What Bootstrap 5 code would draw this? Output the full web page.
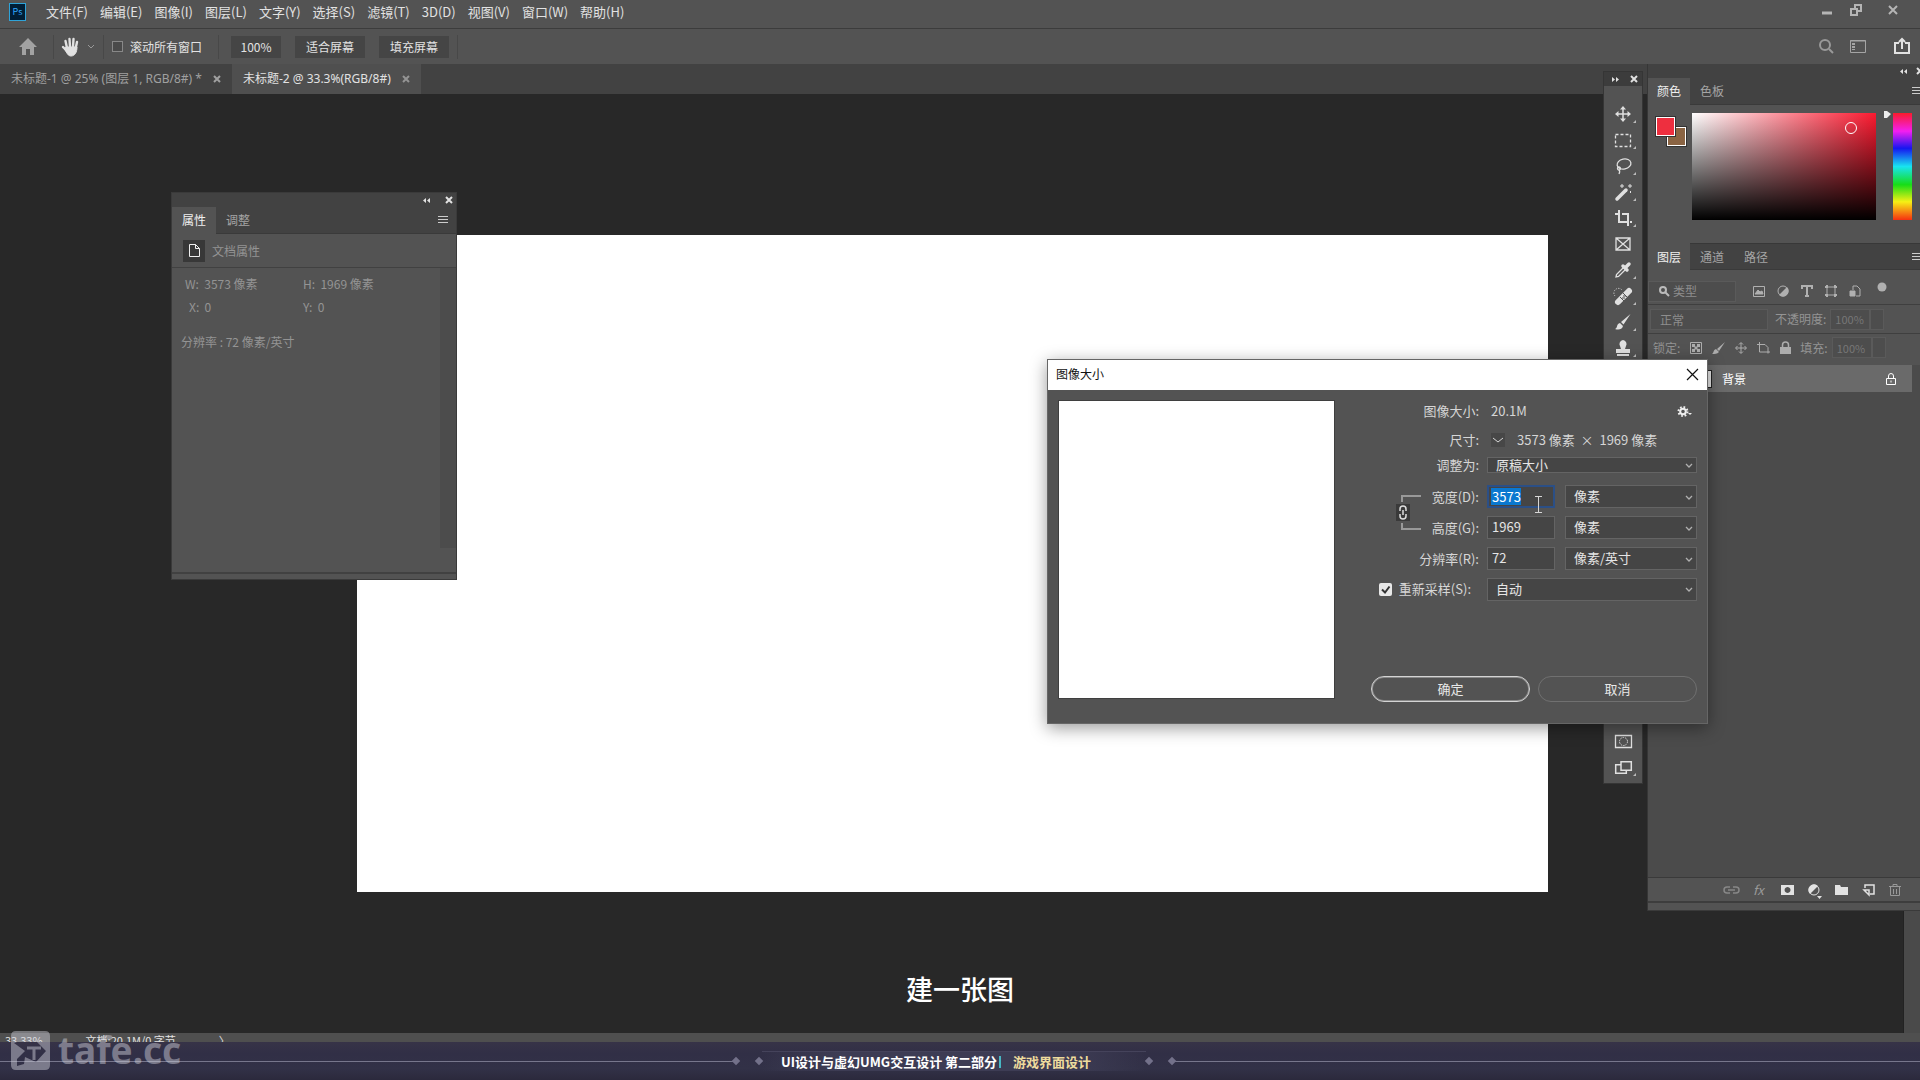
<!DOCTYPE html>
<html lang="zh-CN">
<head>
<meta charset="utf-8">
<meta name="viewport" content="width=device-width, initial-scale=1">
<title>图像大小</title>
<link href="https://cdn.jsdelivr.net/npm/bootstrap@5.3.0/dist/css/bootstrap.min.css" rel="stylesheet">
<style>
  body { font-family: "Noto Sans CJK SC", "Noto Sans", sans-serif; font-size: 13px; line-height: 20px; color: #e2e2e2; background: #282828; }
  button, input, select { font: inherit; color: inherit; }
  svg { display: block; fill: none; stroke: currentColor; flex: none; overflow: visible; }
  .plain { background: none; border: 0; padding: 0; color: inherit; }
  .bg-face { background: #535353; }
  .menubar { height: 29px; border-bottom: 1px solid #3c3c3c; padding: 0 0 4px 9px; }
  .menubar nav { gap: 12px; margin-left: 20px; }
  .menubar a { color: #e2e2e2; text-decoration: none; }
  .pslogo { width: 17px; height: 18px; background: #001e36; border: 1px solid #2fa3d8; color: #31a8ff; font-size: 9px; line-height: 16px; text-align: center; }
  .winbtns { gap: 17px; padding: 0 21px 5px 0; color: #b5b5b5; }
  .optbar { height: 35px; padding: 0 10px 0 19px; }
  .optbtns { gap: 14px; margin-left: 12px; }
  .optbtn { height: 22px; background: #454545; border: 0; font-size: 12px; width: 70px; padding: 0; line-height: 20px; }
  .optbtn.pct { width: 50px; }
  .optlabel { gap: 7px; font-size: 12px; }
  .optcheck { width: 11px; height: 11px; margin: 0; appearance: none; background: #4a4a4a; border: 1px solid #888; }
  .vline { width: 1px; height: 24px; background: #484848; }
  .doctabs { height: 30px; background: #424242; font-family: "Noto Sans", "Noto Sans CJK SC", sans-serif; font-size: 12px; }
  .doctab { height: 30px; padding: 0 12px 0 11px; gap: 12px; color: #a0a0a0; }
  .doctab.on { background: #4f4f4f; color: #e2e2e2; }
  .sheet { inset: 141px 372px 141px 357px; background: #fff; }
  .statusbar { height: 9px; background: #4f4f4f; font-size: 11px; line-height: 14px; gap: 43px; padding-left: 5px; overflow: hidden; }
  .vscroll { right: 0; top: 0; bottom: 0; width: 17px; background: #4a4a4a; border-left: 1px solid #222; }
  .coursebar { height: 38px; background: linear-gradient(#373347, #312f46 30%, #323147 70%, #2b293c); z-index: 1; }
  .coursebar .rule { flex: 1 1 0; height: 1px; background: #77768c; }
  .coursebar .rule.wide { flex-basis: 12px; }
  .gem { width: 6px; height: 6px; background: #73718a; transform: rotate(45deg); }
  .coursetitle { height: 20px; border-top: 1px solid #45435b; font-weight: 700; color: #fff; width: 384px; padding-left: 19px; background: linear-gradient(90deg, transparent, #3d3c54 20%, #3d3c54 80%, transparent); }
  .bar-mark { width: 2px; height: 12px; background: #47b7c4; margin: 0 12px 0 2px; }
  .gold { color: #eedb9d; }
  .subtitle { bottom: 70px; left: 0; right: 0; font-size: 27px; line-height: 42px; font-weight: 500; color: #fff; z-index: 2; }
  .watermark { left: 11px; bottom: 8px; z-index: 3; gap: 8px; color: #d5d5df; opacity: .45; font: 700 37px/44px "Noto Sans", sans-serif; }
  .toolbox { left: calc(100% - 316px); top: 8px; width: 38px; height: 711px; color: #e0e0e0; box-shadow: 0 0 0 1px #353535; }
  .grip { height: 14px; background: #3c3c3c; padding: 0 5px 0 8px; }
  .tools { padding: 15px 0 3px; }
  .tools button { height: 26px; position: relative; display: flex; justify-content: center; align-items: center; width: 100%; }
  .tools .more::after { content: ""; position: absolute; right: 6px; bottom: 4px; border-left: 3px solid transparent; border-bottom: 3px solid #bbb; }
  .dock { right: 0; top: 0; width: 273px; height: 847px; border-left: 1px solid #363636; background: #4b4b4b; font-size: 12px; }
  .tabstrip { background: #424242; height: 27px; border-bottom: 1px solid #3a3a3a; }
  .tabstrip button { height: 27px; padding: 0 10px; color: #a5a5a5; font-size: 12px; }
  .tabstrip button.on { background: #535353; color: #f0f0f0; padding: 0 9px; }
  .props .tabstrip button.on { padding: 0 10px; }
  .dim { color: #949494; }
  .colorpane { height: 138px; padding: 8px 8px 0 8px; }
  .swatches { width: 36px; height: 36px; }
  .swatches span { width: 19px; height: 19px; border: 1px solid #fff; outline: 1px solid #333; }
  .fg { left: 0; top: 4px; background: #ee2f3f; z-index: 1; }
  .bgc { left: 11px; top: 14px; background: #8a6443; }
  .field { width: 184px; height: 107px; background: linear-gradient(to top, #000, transparent), linear-gradient(to right, #fff, #fb1a30); }
  .ring { left: 153px; top: 9px; width: 12px; height: 12px; border: 1px solid #fff; border-radius: 50%; }
  .hue { width: 19px; height: 107px; background: linear-gradient(#fb1b2b, #f31ff0 17%, #1616f0 33%, #18e4f0 50%, #17dd17 67%, #f6f015 83%, #f63010); }
  .dockrow { border-bottom: 1px solid #3f3f3f; background: #535353; }
  .dark-box { border: 1px solid #5a5a5a; background: #4d4d4d; height: 21px; color: #8e8e8e; font-size: 12px; border-radius: 0; padding: 0 6px; }
  .tiny { font-size: 11px; width: 40px; padding: 0 4px; color: #777; }
  .layer { height: 27px; margin-right: 8px; background: #6a6a6a; color: #fff; padding: 0 16px 0 39px; }
  .thumb { width: 25px; height: 18px; border: 1px solid #222; background: #e8e8e8; }
  .dockfoot { height: 26px; background: #535353; border-top: 1px solid #3a3a3a; border-bottom: 2px solid #3d3d3d; padding-right: 19px; gap: 14px; }
  .props { left: 171px; top: 128px; width: 286px; height: 388px; border: 1px solid #3a3a3a; font-size: 12px; }
  .prophead { height: 14px; background: #424242; }
  .docline { height: 34px; border-bottom: 1px solid #414141; padding-left: 11px; gap: 7px; }
  .docicon { width: 22px; height: 22px; background: #383838; color: #eee; }
  .props .inner { background: #4c4c4c; width: 16px; }
  .propbody { padding: 6px 0 0 9px; }
  .proprow { height: 23px; }
  .pw { width: 118px; }
  .px { width: 114px; }
  .dlg { left: 1047px; top: 295px; width: 661px; height: 365px; border: 1px solid #666; box-shadow: 0 4px 16px rgba(0,0,0,.4); z-index: 5; color: #d6d6d6; }
  .dlgtitle { height: 30px; background: #fff; color: #111; font-size: 12px; padding: 0 9px 2px 8px; }
  .preview { width: 277px; height: 299px; background: #fff; border: 1px solid #3f3f3f; margin: 10px 0 0 10px; flex: none; }
  .frm { padding: 6px 10px 21px 0; }
  .frow { height: 31px; }
  .frow.short { height: 22px; margin-bottom: 5px; }
  .frow.h30 { height: 30px; }
  .frow.h28 { height: 28px; }
  .lab { width: 144px; margin-right: 8px; text-align: right; }
  .fld { width: 210px; }
  .dlg .form-control, .dlg .form-select { height: 23px; min-height: 0; border-radius: 0; border: 1px solid #646464; background-color: #454545; color: #e6e6e6; font-size: 13px; line-height: 19px; padding: 0 0 2px 8px; box-shadow: none; }
  .dlg .form-control { width: 68px; padding-left: 4px; }
  .dlg .form-select { width: 100%; background-image: url("data:image/svg+xml,%3Csvg xmlns='http://www.w3.org/2000/svg' viewBox='0 0 10 10'%3E%3Cpath d='M2 4l3 3 3-3' fill='none' stroke='%23b0b0b0' stroke-width='1.3'/%3E%3C/svg%3E"); background-size: 10px 10px; background-position: right 2px center; }
  .dlg .form-select.unit { width: 132px; }
  .dlg .form-select.slim { height: 16px; line-height: 14px; padding-bottom: 0; }
  .dlg .form-control.sel { border: 2px solid #2b4f86; color: #fff; padding-left: 3px; padding-bottom: 0; background: linear-gradient(#0a78d0, #0a78d0) 2px 1px / 30px 17px no-repeat #454545; }
  .chk { appearance: none; width: 13px; height: 13px; margin: 0 7px 0 0; border-radius: 2px; background: #e8e8e8 url("data:image/svg+xml,%3Csvg xmlns='http://www.w3.org/2000/svg' viewBox='0 0 13 13'%3E%3Cpath d='M3 6.5l3 3 4.500-6' fill='none' stroke='%23333' stroke-width='2'/%3E%3C/svg%3E"); }
  .chain { left: 60px; top: 13px; }
  .ibeam { top: 15px; left: 199px; }
  .pill { width: 159px; height: 26px; border-radius: 13px; border: 1px solid #707070; background: none; color: #e8e8e8; font-size: 13px; line-height: 20px; padding: 0; }
  .pill.main { border-color: #d4d4d4; box-shadow: inset 0 0 0 1px #8a8a8a; }
</style>
<script src="https://cdn.jsdelivr.net/npm/bootstrap@5.3.0/dist/js/bootstrap.bundle.min.js"></script>
</head>
<body class="d-flex flex-column vh-100 overflow-hidden position-relative">

<header class="menubar bg-face d-flex align-items-center">
  <div class="pslogo">Ps</div>
  <nav class="d-flex">
    <a href="#">文件(F)</a><a href="#">编辑(E)</a><a href="#">图像(I)</a><a href="#">图层(L)</a><a href="#">文字(Y)</a><a href="#">选择(S)</a><a href="#">滤镜(T)</a><a href="#">3D(D)</a><a href="#">视图(V)</a><a href="#">窗口(W)</a><a href="#">帮助(H)</a>
  </nav>
  <div class="winbtns d-flex ms-auto align-items-center">
    <button class="plain" aria-label="最小化"><svg width="12" height="12"><path d="M1 9h10" stroke-width="3"/></svg></button>
    <button class="plain" aria-label="还原"><svg width="12" height="12" stroke-width="2"><path d="M1 5h6v6H1zM5 5V1h6v6H7"/></svg></button>
    <button class="plain ms-2" aria-label="关闭"><svg width="12" height="12" stroke-width="2"><path d="M2 2l8 8M10 2l-8 8"/></svg></button>
  </div>
</header>

<div class="optbar bg-face d-flex align-items-center">
  <button class="plain" aria-label="主页"><svg width="18" height="17" style="color:#a2a2a2"><path fill="currentColor" stroke="none" d="M9 0L0 9h3v8h4v-6h4v6h4V9h3z"/></svg></button>
  <div class="vline ms-3 me-2"></div>
  <button class="plain d-flex align-items-center gap-2" aria-label="抓手工具">
    <svg width="17" height="20" stroke-width="2.400" stroke-linecap="round"><path d="M5 11L3.500 4M8 10L7.500 2M11 10l.5-8M13.500 12L15 5M5 14l-4-4"/><path fill="currentColor" stroke-width="1" d="M4 10h11c0 5-2 9-6 9-3 0-4-3-6-6z"/></svg>
    <svg width="8" height="6" style="color:#999"><path d="M1 1l3 3 3-3"/></svg>
  </button>
  <div class="vline ms-2 me-1"></div>
  <label class="optlabel d-flex align-items-center ms-1"><input type="checkbox" class="optcheck">滚动所有窗口</label>
  <div class="vline ms-3"></div>
  <div class="optbtns d-flex"><button class="optbtn pct">100%</button><button class="optbtn">适合屏幕</button><button class="optbtn">填充屏幕</button></div>
  <div class="vline ms-2"></div>
  <div class="d-flex align-items-center ms-auto">
    <button class="plain" aria-label="搜索"><svg width="15" height="15" stroke-width="2" style="color:#999"><circle cx="6" cy="6" r="5"/><path d="M10 10l4 4"/></svg></button>
    <button class="plain ms-3" aria-label="工作区"><svg width="16" height="13" style="color:#a5a5a5"><path d="M.5.5h15v12H.5zM0 1h16"/><path d="M3.500 3v7" stroke-width="3" stroke-dasharray="2 1"/></svg></button>
    <button class="plain ms-4 ps-1" aria-label="共享"><svg width="16" height="17" stroke-width="2"><path d="M5 5H1v10h14V5h-4M8 11V2M5 4l3-3 3 3"/></svg></button>
  </div>
</div>

<main class="flex-grow-1 d-flex flex-column position-relative">
  <div class="doctabs d-flex">
    <div class="doctab d-flex align-items-center">未标题-1 @ 25% (图层 1, RGB/8#) *<button class="plain" aria-label="关闭"><svg width="6" height="6" stroke-width="2"><path d="M0 0l6 6M6 0L0 6"/></svg></button></div>
    <div class="doctab on d-flex align-items-center">未标题-2 @ 33.3%(RGB/8#)<button class="plain dim" aria-label="关闭"><svg width="6" height="6" stroke-width="2"><path d="M0 0l6 6M6 0L0 6"/></svg></button></div>
  </div>
  <div class="flex-grow-1 position-relative">
    <div class="sheet position-absolute"></div>
    <div class="vscroll position-absolute"></div>
  </div>
  <div class="statusbar d-flex"><span>33.33%</span><span>文档:20.1M/0 字节</span><span>〉</span></div>

  <section class="props position-absolute bg-face d-flex flex-column">
    <div class="prophead d-flex justify-content-end align-items-center gap-3 pe-1">
      <svg width="7" height="5"><path fill="currentColor" stroke="none" d="M3 0v5L0 2.500zM7 0v5L4 2.500z"/></svg>
      <svg width="6" height="6" stroke-width="2"><path d="M0 0l6 6M6 0L0 6"/></svg>
    </div>
    <div class="tabstrip d-flex align-items-center pe-1"><button class="plain on">属性</button><button class="plain">调整</button>
      <svg class="ms-auto me-1" width="10" height="8" style="color:#ccc"><path d="M0 .5h10M0 3.500h10M0 6.500h10"/></svg></div>
    <div class="docline d-flex align-items-center dim">
      <span class="docicon d-flex align-items-center justify-content-center"><svg width="11" height="13"><path d="M.5.5h6l4 4v8H.5zM6.500.5v4h4"/></svg></span>文档属性</div>
    <div class="d-flex flex-grow-1 dim">
      <div class="propbody flex-grow-1">
        <div class="proprow d-flex ps-1"><span class="pw">W:&nbsp; 3573 像素</span><span>H:&nbsp; 1969 像素</span></div>
        <div class="proprow d-flex ps-2"><span class="px">X:&nbsp; 0</span><span>Y:&nbsp; 0</span></div>
        <div class="mt-2 pt-1">分辨率 : 72 像素/英寸</div>
      </div>
      <div class="inner mb-4"></div>
    </div>
    <div style="height:7px;border-top:2px solid #414141"></div>
  </section>

  <aside class="toolbox position-absolute bg-face d-flex flex-column">
    <div class="grip d-flex justify-content-between align-items-center"><svg width="7" height="5"><path fill="currentColor" stroke="none" d="M0 0v5l3-2.500zM4 0v5l3-2.500z"/></svg><svg width="6" height="6" stroke-width="2"><path d="M0 0l6 6M6 0L0 6"/></svg></div>
    <div class="tools flex-grow-1 d-flex flex-column">
      <button class="plain more" aria-label="移动"><svg width="16" height="16"><path d="M8 2v12M2 8h12" stroke-width="1.500"/><path fill="currentColor" stroke="none" d="M8 0l3 3.500H5zM8 16l3-3.500H5zM0 8l3.500-3v6zM16 8l-3.500-3v6z"/></svg></button>
      <button class="plain more" aria-label="选框"><svg width="16" height="13"><path stroke-width="1.300" stroke-dasharray="3 2" d="M.5.5h15v12H.5z"/></svg></button>
      <button class="plain more" aria-label="套索"><svg width="17" height="16" stroke-width="1.300"><ellipse cx="9" cy="6" rx="7" ry="5" transform="rotate(-12 9 6)"/><circle cx="4" cy="10.500" r="1.500"/><path d="M4 12c1 1 1 2 0 4"/></svg></button>
      <button class="plain more" aria-label="魔棒"><svg width="17" height="17"><path d="M2 15L11 6" stroke-width="3.500" stroke-linecap="round"/><path d="M7 0v4M5 2h4M15 0v4M13 2h4M15.500 7v2M9.500 7.500l1.500-1.500"/></svg></button>
      <button class="plain more" aria-label="裁剪"><svg width="17" height="17" stroke-width="2"><path d="M4 0v12h8M0 4h3M7 4h6v12M15 12h2"/></svg></button>
      <button class="plain" aria-label="图框"><svg width="16" height="14" stroke-width="1.300"><path d="M1 1h14v12H1zM1 1l14 12M15 1L1 13"/></svg></button>
      <button class="plain more" aria-label="吸管"><svg width="16" height="16"><path stroke-width="1.300" d="M9 5L1.500 12.500 1 15l2.500-.5L11 7"/><path d="M8 4l4 4M11 5l3-3" stroke-width="3.500" stroke-linecap="round"/></svg></button>
      <button class="plain more" aria-label="修复画笔"><svg width="18" height="18"><path d="M4 15L15 4" stroke-width="6" stroke-linecap="round"/><path stroke="#535353" d="M6 10l4 4M9 6l4 4M8 11h3M9 9h3"/><path d="M1 9a4 4 0 0 1 7-6" stroke-dasharray="1 1.500"/></svg></button>
      <button class="plain more" aria-label="画笔"><svg width="16" height="16"><path fill="currentColor" stroke="none" d="M15.500 0L6 8l2.500 2.500zM5 9l3 3c-1 4-5 4-8 3 3-1 1-5 5-6z"/></svg></button>
      <button class="plain more" aria-label="图章"><svg width="16" height="16"><path fill="currentColor" stroke="none" d="M8 0a4 4 0 0 1 3 6l-1 3h5v4H1V9h5L5 6a4 4 0 0 1 3-6zM2 14h12v2H2z"/></svg></button>
      <button class="plain mt-auto" aria-label="快速蒙版"><svg width="17" height="13"><path stroke-width="1.300" d="M.5.5h16v12H.5z"/><circle cx="8.500" cy="6.500" r="4" stroke-dasharray="1.500 1"/></svg></button>
      <button class="plain more" aria-label="屏幕模式"><svg width="17" height="13" stroke-width="1.500"><path d="M6 .7h10.300v8.600H6zM6 3.700H.7v8.600h10.600V9.300"/></svg></button>
    </div>
  </aside>

  <aside class="dock position-absolute d-flex flex-column">
    <div class="prophead d-flex justify-content-end align-items-center gap-2"><svg width="7" height="5"><path fill="currentColor" stroke="none" d="M3 0v5L0 2.500zM7 0v5L4 2.500z"/></svg><svg width="5" height="6" stroke-width="2"><path d="M2 0l3 3-3 3"/></svg></div>
    <div class="tabstrip d-flex align-items-center"><button class="plain on">颜色</button><button class="plain">色板</button><svg class="ms-auto" width="8" height="8" style="color:#ccc"><path d="M0 .5h10M0 3.500h10M0 6.500h10"/></svg></div>
    <div class="colorpane bg-face d-flex">
      <div class="swatches position-relative"><span class="fg position-absolute"></span><span class="bgc position-absolute"></span></div>
      <div class="field position-relative"><span class="ring position-absolute"></span></div>
      <svg width="17" height="12" style="color:#eee"><path fill="currentColor" stroke="none" d="M8-2h3l4 3-4 4H8z"/></svg>
      <div class="hue"></div>
    </div>
    <div class="tabstrip d-flex align-items-center" style="border-top:1px solid #383838"><button class="plain on">图层</button><button class="plain">通道</button><button class="plain">路径</button><svg class="ms-auto" width="8" height="8" style="color:#ccc"><path d="M0 .5h10M0 3.500h10M0 6.500h10"/></svg></div>
    <div class="dockrow d-flex align-items-center pt-2" style="height:35px;color:#b0b0b0">
      <div class="dark-box d-flex align-items-center gap-1" style="width:88px;padding-left:10px"><svg width="10" height="10" stroke-width="2" style="color:#bbb"><circle cx="4" cy="4" r="3"/><path d="M6.500 6.500L10 10"/></svg>类型</div>
      <div class="d-flex align-items-center" style="gap:12px;margin-left:17px">
        <svg width="12" height="11"><path d="M.5.5h11v10H.5z"/><path fill="currentColor" d="M2 8l3-4 2 2 2-1 1 3z"/></svg>
        <svg width="12" height="12"><circle cx="6" cy="6" r="5"/><path fill="currentColor" stroke="none" d="M10 2A5 5 0 0 1 2 10z"/></svg>
        <svg width="12" height="12" stroke-width="2"><path d="M1 4V1h10v3M6 1v10M4 11h4"/></svg>
        <svg width="12" height="12"><path d="M2 2h8v8H2z"/><path stroke-width="2" d="M0 2h3M9 2h3M0 10h3M9 10h3M2 0v3M10 0v3M2 9v3M10 9v3"/></svg>
        <svg width="12" height="12"><path d="M4 5V1h4l3 3v7H7"/><path fill="currentColor" d="M1 6h5v5H1z"/></svg>
        <svg width="10" height="20" class="ms-1"><circle cx="5" cy="6" r="4.500" fill="currentColor" stroke="none"/></svg>
      </div>
    </div>
    <div class="dockrow d-flex align-items-center dim" style="height:29px;padding-left:2px">
      <select class="dark-box" style="width:118px;appearance:none;padding-left:9px" aria-label="混合模式"><option>正常</option></select>
      <label for="op" style="margin:0 4px 0 7px">不透明度:</label><input id="op" class="dark-box tiny" value="100%"><span class="dark-box" style="width:14px"></span>
    </div>
    <div class="d-flex align-items-center bg-face dim pb-1" style="height:31px;padding-left:5px">
      <span>锁定:</span>
      <div class="d-flex align-items-center" style="gap:10px;margin:0 9px 0 10px;color:#adadad">
        <svg width="12" height="12"><path d="M.5.5h11v11H.5z"/><path fill="currentColor" stroke="none" d="M2 2h3v3H2zM7 2h3v3H7zM4.500 4.500h3v3h-3zM2 7h3v3H2zM7 7h3v3H7z"/></svg>
        <svg width="13" height="12"><path fill="currentColor" stroke="none" d="M13 0L5 7l2 2zM4 7l3 3c-2 2-4 2-7 2 2-1 1-4 4-5z"/></svg>
        <svg width="12" height="12"><path d="M6 1v10M1 6h10M4 2.500L6 .5l2 2M4 9.500l2 2 2-2M2.500 4l-2 2 2 2M9.500 4l2 2-2 2"/></svg>
        <svg width="13" height="12"><path d="M0 2.500h8l3 3v6M2.500 0v10H13"/></svg>
        <svg width="11" height="12"><path fill="currentColor" stroke="none" d="M0 5h11v7H0z"/><path stroke-width="1.500" d="M2.500 5V3a3 3 0 0 1 6 0v2"/></svg>
      </div>
      <label for="fi" class="me-1">填充:</label><input id="fi" class="dark-box tiny" value="100%"><span class="dark-box" style="width:14px"></span>
    </div>
    <div class="layer d-flex align-items-center"><span class="thumb"></span><span style="margin-left:10px">背景</span><svg class="ms-auto" width="10" height="12"><path d="M.5 5.500h9v6h-9zM2.500 5V3a2.500 2.500 0 0 1 5 0v2M5 7.500v2"/></svg></div>
    <div class="flex-grow-1"></div>
    <div class="dockfoot d-flex justify-content-end align-items-center">
      <svg width="15" height="8" stroke-width="1.500" style="color:#888"><path d="M6 1H3a3 3 0 0 0 0 6h3M9 1h3a3 3 0 0 1 0 6H9M4 4h7"/></svg>
      <i style="color:#999;font-size:13px;width:14px">fx</i>
      <svg width="13" height="10"><path fill="currentColor" stroke="none" fill-rule="evenodd" d="M0 0h13v10H0zM6.500 2a3 3 0 1 0 .1 0z"/></svg>
      <svg width="13" height="12"><circle cx="6" cy="6" r="5"/><path fill="currentColor" stroke="none" d="M10 2A5 5 0 0 0 2 10zM9 12h5l-2.500 3z"/></svg>
      <svg width="13" height="10"><path fill="currentColor" stroke="none" d="M0 0h5l1 2h7v8H0z"/></svg>
      <svg width="13" height="11" stroke-width="1.500"><path d="M3 4V1h9v9H8M2 6h5v5z"/></svg>
      <svg width="12" height="12" style="color:#999"><path d="M0 2.500h12M4 2V.5h4V2M1.500 3v8.500h9V3M4.500 5v5M7.500 5v5"/></svg>
    </div>
    <div class="bg-face" style="height:8px;border-bottom:1px solid #3a3a3a"></div>
  </aside>

  <section class="dlg position-absolute bg-face d-flex flex-column" role="dialog" aria-label="图像大小">
    <div class="dlgtitle d-flex justify-content-between align-items-center"><span>图像大小</span><button class="plain" aria-label="关闭"><svg width="11" height="11" stroke-width="1.200"><path d="M0 0l11 11M11 0L0 11"/></svg></button></div>
    <div class="d-flex flex-grow-1">
      <div class="preview"></div>
      <form class="frm flex-grow-1 d-flex flex-column align-items-end">
        <div class="frow h30 d-flex align-items-center"><span class="lab">图像大小:</span><span class="fld d-flex align-items-center justify-content-between ps-1">20.1M<svg width="15" height="11" class="me-1" style="color:#eee"><circle cx="5" cy="5.500" r="2.800" stroke-width="2"/><circle cx="5" cy="5.500" r="4.500" stroke-width="2" stroke-dasharray="1.700 1.830"/><path stroke="none" fill="currentColor" d="M10 7h4l-2 2z"/></svg></span></div>
        <div class="frow h28 d-flex align-items-center"><span class="lab">尺寸:</span><span class="fld d-flex align-items-center ps-1"><svg width="14" height="14" class="me-2" style="background:#474747"><path d="M2 5l5 4 5-4"/></svg><span class="ms-1">3573 像素&nbsp; ×&nbsp; 1969 像素</span></span></div>
        <div class="frow short d-flex align-items-center"><label class="lab" for="fit">调整为:</label><span class="fld"><select id="fit" class="form-select slim d-block"><option>原稿大小</option></select></span></div>
        <div class="position-relative w-100 d-flex flex-column align-items-end">
          <div class="frow d-flex align-items-center"><label class="lab" for="w">宽度(D):</label><span class="fld d-flex justify-content-between"><input id="w" class="form-control sel" value="3573"><select class="form-select unit" aria-label="宽度单位"><option>像素</option></select></span></div>
          <div class="frow d-flex align-items-center"><label class="lab" for="h">高度(G):</label><span class="fld d-flex justify-content-between"><input id="h" class="form-control" value="1969"><select class="form-select unit" aria-label="高度单位"><option>像素</option></select></span></div>
          <svg class="chain position-absolute" width="26" height="38" style="color:#999"><path stroke-width="2" d="M7 8V2h19M7 29v6h19"/><path fill="#3a3a3a" stroke="none" d="M1 10h14v17H1z"/><path stroke="#ddd" stroke-width="1.500" d="M5 17v-2a3 3 0 0 1 6 0v2M5 20v2a3 3 0 0 0 6 0v-2M8 16v5"/></svg>
          <svg class="ibeam position-absolute" width="9" height="17"><path d="M1 .5h7M1 16.500h7M4.500 1v15"/></svg>
        </div>
        <div class="frow d-flex align-items-center"><label class="lab" for="r">分辨率(R):</label><span class="fld d-flex justify-content-between"><input id="r" class="form-control" value="72"><select class="form-select unit" aria-label="分辨率单位"><option>像素/英寸</option></select></span></div>
        <div class="frow h30 d-flex align-items-center"><label class="lab d-flex align-items-center justify-content-end pe-2"><input type="checkbox" class="chk" checked>重新采样(S):</label><span class="fld"><select class="form-select d-block" aria-label="重新采样"><option>自动</option></select></span></div>
        <div class="mt-auto d-flex justify-content-end gap-2"><button type="button" class="pill main">确定</button><button type="button" class="pill">取消</button></div>
      </form>
    </div>
  </section>
</main>

<footer class="coursebar d-flex align-items-center">
  <span class="rule"></span><span class="gem"></span><span style="width:17px"></span><span class="gem"></span>
  <div class="coursetitle d-flex align-items-center text-nowrap">UI设计与虚幻UMG交互设计 第二部分<span class="bar-mark"></span><span class="gold">游戏界面设计</span></div>
  <span class="gem"></span><span style="width:17px"></span><span class="gem"></span><span class="rule wide"></span>
</footer>

<div class="subtitle position-absolute text-center">建一张图</div>
<div class="watermark position-absolute d-flex align-items-center"><svg width="39" height="39"><path fill="currentColor" stroke="none" fill-rule="evenodd" d="M5 0h29q5 0 5 5v29q0 5-5 5H5q-5 0-5-5V5q0-5 5-5zM3 12l11 8-8 8v7l7-2 1-7 11 5 10-11-9-9H6z"/><path stroke-width="3" d="M16 17h14M23 17v12"/></svg>tafe.cc</div>
</body>
</html>
